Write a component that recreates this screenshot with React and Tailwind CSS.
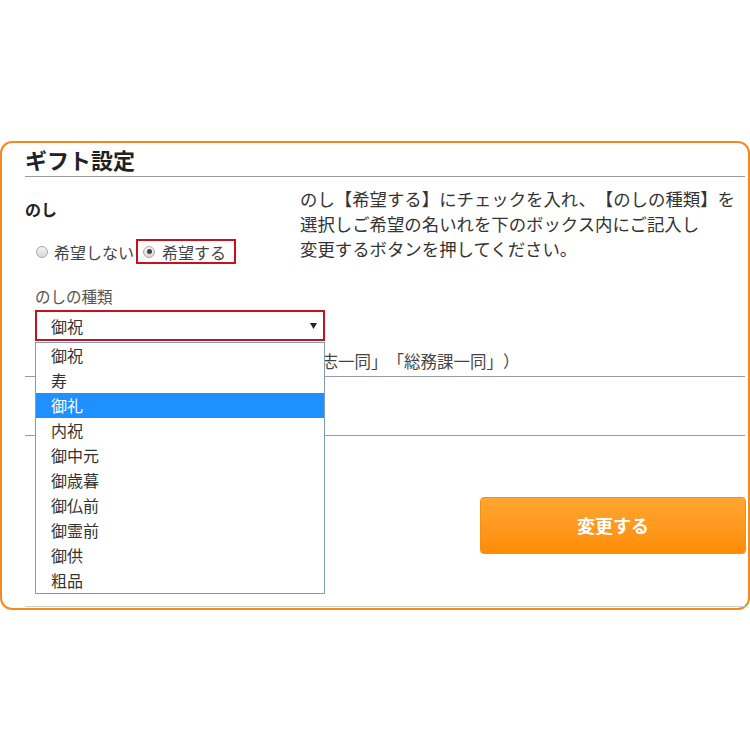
import React from 'react';

const NOSHI = ['御祝', '寿', '御礼', '内祝', '御中元', '御歳暮', '御仏前', '御霊前', '御供', '粗品'];

function Radio({ checked }) {
  return (
    <span className="inline-flex w-[12px] h-[12px] rounded-full border border-[#a9a9a9] bg-gradient-to-b from-[#f4f4f4] to-[#d9d9d9] items-center justify-center">
      {checked && <span className="w-[5px] h-[5px] rounded-full bg-[#444]" />}
    </span>
  );
}

export default function App() {
  return (
    <div
      className="w-[750px] h-[750px] bg-white pt-[141px] text-[#333] [text-spacing-trim:space-all]"
      style={{ fontFamily: '"Noto Sans CJK JP", "Noto Sans", sans-serif' }}
    >
      <div className="relative h-[469px] border-2 border-[#f4891e] rounded-[12px] pl-[23px] pr-[3px] flex flex-col">
        {/* Title */}
        <h2 className="text-[22px] font-bold leading-[33px] h-[34px] border-b border-[#999] text-[#222]">
          ギフト設定
        </h2>

        {/* Noshi row */}
        <div className="flex">
          <div className="w-[275px] flex-shrink-0">
            <div className="pt-[20px] text-[16px] font-bold leading-[24px] text-[#222]">のし</div>
            <div className="mt-[18px] flex items-center h-[25px] text-[16px] leading-[22px] text-[#444]">
              <div className="flex items-center pl-[11px] gap-[6px]">
                <Radio />
                <span>希望しない</span>
              </div>
              <div className="ml-[2px] h-[25px] w-[100px] border-2 border-[#c4121e] flex items-center pl-[5px] gap-[7px]">
                <Radio checked />
                <span>希望する</span>
              </div>
            </div>
            <div className="mt-[21px] ml-[10px] text-[15.5px] leading-[22px] text-[#555]">のしの種類</div>
            <div className="mt-[3px] ml-[10px] w-[290px] h-[31px] border-2 border-[#c4121e] flex items-center justify-between pl-[14px] pr-[6px] text-[16px] text-[#333] bg-white">
              <span>御祝</span>
              <svg width="7" height="6" viewBox="0 0 7 6">
                <path d="M0 0 H7 L3.5 6 Z" fill="#222" />
              </svg>
            </div>
          </div>
          <div className="pt-[9px] text-[17.4px] leading-[25px] text-[#333] whitespace-nowrap">
            のし【希望する】にチェックを入れ、【のしの種類】を<br />
            選択しご希望の名いれを下のボックス内にご記入し<br />
            変更するボタンを押してください。
          </div>
        </div>

        {/* Name field */}
        <div className="mt-[8px] pl-[16px] text-[16.5px] leading-[25px] h-[28px] border-b border-[#999] text-[#444] whitespace-nowrap">
          名いれ（例：「山田太郎」「営業部有志一同」「総務課一同」）
        </div>
        <div className="h-[59px] border-b border-[#999]" />

        {/* Button */}
        <div className="flex justify-end pt-[61px]">
          <button className="w-[266px] h-[57px] -mr-[1px] rounded-[4px] border border-[#f39019] bg-gradient-to-b from-[#ffa631] to-[#ff8c00] text-white text-[18px] font-bold">
            変更する
          </button>
        </div>
        <div className="mt-auto h-[2px] border-b border-[#cfcfcf] mb-[1px]" />

        {/* Open dropdown list */}
        <ul className="absolute left-[33px] top-[199px] w-[290px] border border-[#7f9db9] bg-white text-[16px] text-[#333]">
          {NOSHI.map((n) => (
            <li
              key={n}
              className={`h-[25px] leading-[25px] pl-[15px] ${n === '御礼' ? 'bg-[#1e90ff] text-white' : ''}`}
            >
              {n}
            </li>
          ))}
        </ul>
      </div>
    </div>
  );
}
